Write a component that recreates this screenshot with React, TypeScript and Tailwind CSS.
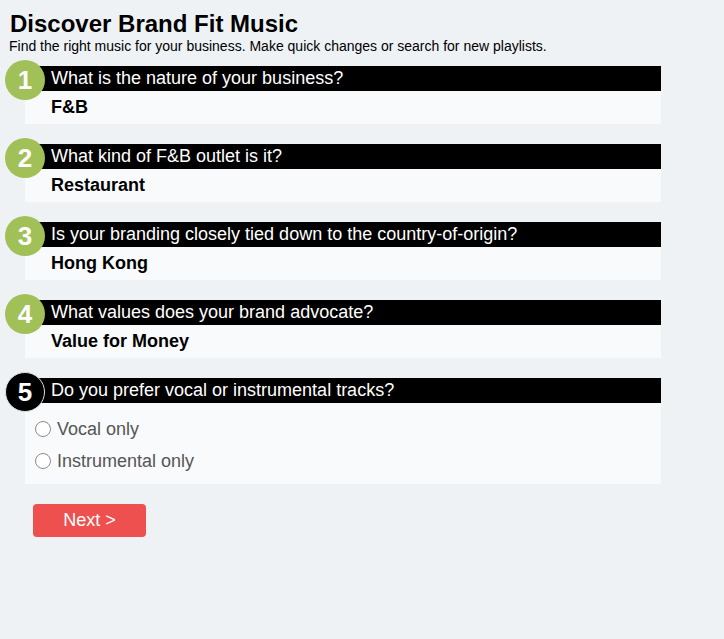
import React from "react";

interface QuestionProps {
  num: number;
  question: string;
  answer?: string;
  active?: boolean;
  children?: React.ReactNode;
}

const Question = ({ num, question, answer, active, children }: QuestionProps) => {
  return (
    <div className="relative w-[636px] ml-[25px] bg-[#f8fafc]">
      <div
        className={`absolute left-[-20px] top-[-6px] w-[40px] h-[40px] rounded-full flex items-center justify-center text-white font-bold text-[26px] ${
          active ? "bg-black border border-[#ddd]" : "bg-[#a1c057]"
        }`}
      >
        {num}
      </div>
      <div className="h-[25px] bg-black text-white text-[18px] leading-[25px] pl-[26px]">
        {question}
      </div>
      {answer && (
        <div className="h-[33px] pl-[26px] font-bold text-[18px] leading-[32px] text-black">
          {answer}
        </div>
      )}
      {children}
    </div>
  );
};

const options = ["Vocal only", "Instrumental only"];

export default function App() {
  return (
    <div
      className="w-full min-h-[639px] bg-[#eff2f5] pt-[11px]"
      style={{ fontFamily: '"Liberation Sans", Arial, sans-serif' }}
    >
      <h1 className="pl-[10px] text-[24px] font-bold leading-[26px] text-black">
        Discover Brand Fit Music
      </h1>
      <p className="pl-[9px] mt-[1px] text-[14px] leading-[16px] text-black">
        Find the right music for your business. Make quick changes or search for new playlists.
      </p>
      <div className="mt-[12px] flex flex-col gap-[20px]">
        <Question num={1} question="What is the nature of your business?" answer="F&B" />
        <Question num={2} question="What kind of F&B outlet is it?" answer="Restaurant" />
        <Question
          num={3}
          question="Is your branding closely tied down to the country-of-origin?"
          answer="Hong Kong"
        />
        <Question num={4} question="What values does your brand advocate?" answer="Value for Money" />
        <Question num={5} question="Do you prefer vocal or instrumental tracks?" active>
          <div className="flex flex-col pt-[10px] pb-[7px] pl-[10px]">
            {options.map((o) => (
              <label key={o} className="h-[32px] flex items-center gap-[6px] text-[18px] text-[#555]">
                <span className="w-[16px] h-[16px] rounded-full border border-[#8a8a8a] bg-white" />
                {o}
              </label>
            ))}
          </div>
        </Question>
      </div>
      <button className="mt-[20px] ml-[33px] w-[113px] h-[33px] rounded-[4px] bg-[#ee4f4f] text-white text-[18px]">
        Next &gt;
      </button>
    </div>
  );
}
